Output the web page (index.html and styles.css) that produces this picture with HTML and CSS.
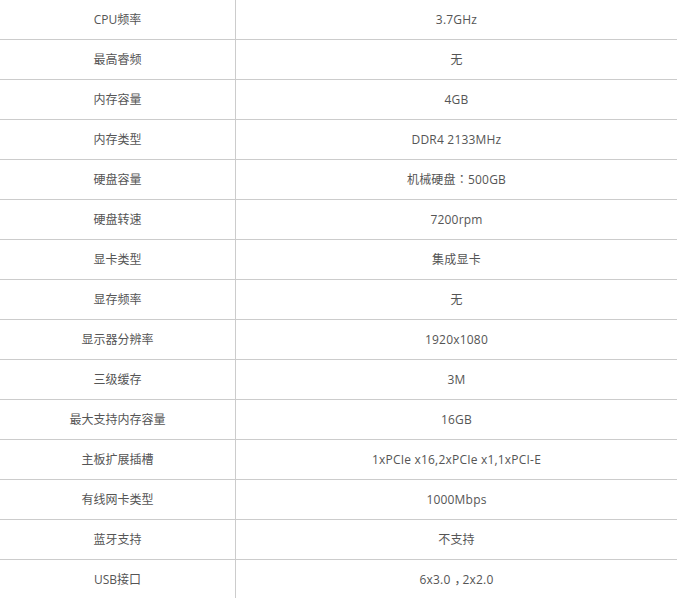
FILE: index.html
```html
<!DOCTYPE html>
<html lang="zh-CN">
<head>
<meta charset="utf-8">
<title>参数</title>
<link rel="stylesheet" href="styles.css">
</head>
<body>
<table class="spec">
<tbody>
<tr><td class="k">CPU频率</td><td class="v">3.7GHz</td></tr>
<tr><td class="k">最高睿频</td><td class="v">无</td></tr>
<tr><td class="k">内存容量</td><td class="v">4GB</td></tr>
<tr><td class="k">内存类型</td><td class="v">DDR4 2133MHz</td></tr>
<tr><td class="k">硬盘容量</td><td class="v">机械硬盘<span class="punct" lang="zh-TW">：</span>500GB</td></tr>
<tr><td class="k">硬盘转速</td><td class="v">7200rpm</td></tr>
<tr><td class="k">显卡类型</td><td class="v">集成显卡</td></tr>
<tr><td class="k">显存频率</td><td class="v">无</td></tr>
<tr><td class="k">显示器分辨率</td><td class="v">1920x1080</td></tr>
<tr><td class="k">三级缓存</td><td class="v">3M</td></tr>
<tr><td class="k">最大支持内存容量</td><td class="v">16GB</td></tr>
<tr><td class="k">主板扩展插槽</td><td class="v">1xPCIe x16,2xPCIe x1,1xPCI-E</td></tr>
<tr><td class="k">有线网卡类型</td><td class="v">1000Mbps</td></tr>
<tr><td class="k">蓝牙支持</td><td class="v">不支持</td></tr>
<tr><td class="k">USB接口</td><td class="v">6x3.0<span class="comma">，</span>2x2.0</td></tr>
</tbody>
</table>
</body>
</html>
```
FILE: styles.css
```css
html, body {
  margin: 0;
  padding: 0;
  background: #fff;
}
body {
  font-family: "Open Sans", "Noto Sans CJK SC", sans-serif;
  font-size: 12px;
  color: #555;
}
.spec {
  width: 677px;
  border-collapse: collapse;
  table-layout: fixed;
}
.spec td {
  height: 39px;
  padding: 0;
  text-align: center;
  vertical-align: middle;
  border-bottom: 1px solid #ccc;
  line-height: 16px;
}
.spec .k {
  width: 235px;
  border-right: 1px solid #ccc;
}
.spec .v {
  letter-spacing: 0.2px;
}
.punct {
  font-family: "Noto Sans CJK TC", sans-serif;
}
.comma {
  margin-left: 4px;
  letter-spacing: -4px;
}
```
